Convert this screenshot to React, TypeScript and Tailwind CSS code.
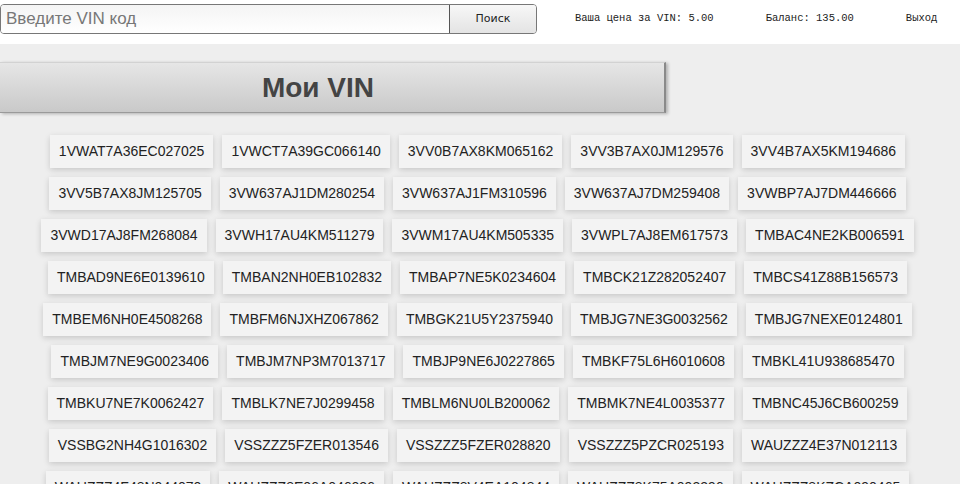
const rows: string[][] = [
  ['1VWAT7A36EC027025', '1VWCT7A39GC066140', '3VV0B7AX8KM065162', '3VV3B7AX0JM129576', '3VV4B7AX5KM194686'],
  ['3VV5B7AX8JM125705', '3VW637AJ1DM280254', '3VW637AJ1FM310596', '3VW637AJ7DM259408', '3VWBP7AJ7DM446666'],
  ['3VWD17AJ8FM268084', '3VWH17AU4KM511279', '3VWM17AU4KM505335', '3VWPL7AJ8EM617573', 'TMBAC4NE2KB006591'],
  ['TMBAD9NE6E0139610', 'TMBAN2NH0EB102832', 'TMBAP7NE5K0234604', 'TMBCK21Z282052407', 'TMBCS41Z88B156573'],
  ['TMBEM6NH0E4508268', 'TMBFM6NJXHZ067862', 'TMBGK21U5Y2375940', 'TMBJG7NE3G0032562', 'TMBJG7NEXE0124801'],
  ['TMBJM7NE9G0023406', 'TMBJM7NP3M7013717', 'TMBJP9NE6J0227865', 'TMBKF75L6H6010608', 'TMBKL41U938685470'],
  ['TMBKU7NE7K0062427', 'TMBLK7NE7J0299458', 'TMBLM6NU0LB200062', 'TMBMK7NE4L0035377', 'TMBNC45J6CB600259'],
  ['VSSBG2NH4G1016302', 'VSSZZZ5FZER013546', 'VSSZZZ5FZER028820', 'VSSZZZ5PZCR025193', 'WAUZZZ4E37N012113'],
  ['WAUZZZ4F48N044070', 'WAUZZZ8E06A046036', 'WAUZZZ8V4EA104844', 'WAUZZZ8K75A093396', 'WAUZZZ8KZCA090465'],
]

function VinChip({ vin }: { vin: string }) {
  return (
    <div className="h-[33px] px-[9px] flex items-center bg-[#f3f3f3] text-[14px] text-[#222] font-['Liberation_Sans',Arial,sans-serif] shadow-[0_2px_6px_rgba(0,0,0,0.16)]">
      {vin}
    </div>
  )
}

export default function App() {
  return (
    <div className="w-[960px] h-[484px] overflow-hidden bg-[#eeeeee]">
      {/* Top bar */}
      <div className="h-[44px] bg-white flex items-start pt-[4px]">
        <div className="flex h-[30px] w-[537px] rounded-[4px] border border-[#777] overflow-hidden">
          <div className="flex-1 flex items-center pl-[5px] bg-gradient-to-b from-[#f4f4f4] to-white text-[17px] text-[#777] font-['Liberation_Sans',Arial,sans-serif]">
            Введите VIN код
          </div>
          <div className="w-[87px] flex items-center justify-center border-l border-[#555] bg-gradient-to-b from-[#f7f7f7] to-[#e4e4e4] text-[11px] text-[#222] font-['DejaVu_Sans',Verdana,sans-serif]">
            Поиск
          </div>
        </div>
        <div className="flex items-center h-[30px] text-[10.5px] text-[#222] font-['Liberation_Mono',monospace]">
          <span className="ml-[38px]">Ваша цена за VIN: 5.00</span>
          <span className="ml-[52px]">Баланс: 135.00</span>
          <span className="ml-[52px]">Выход</span>
        </div>
      </div>

      {/* Title bar */}
      <div className="mt-[18px] w-[666px] h-[51px] flex items-center justify-center pr-[28px] bg-gradient-to-b from-[#e6e6e6] to-[#c9c9c9] border-t border-[#d2d2d2] border-b border-b-[#9a9a9a] border-r-2 border-r-[#8a8a8a] shadow-[2px_1px_3px_rgba(0,0,0,0.25)]">
        <span className="text-[28px] font-bold text-[#444] font-['Liberation_Sans',Arial,sans-serif]">Мои VIN</span>
      </div>

      {/* VIN list */}
      <div className="mt-[22px] w-[955px] flex flex-col gap-[9px]">
        {rows.map((row, i) => (
          <div key={i} className="flex justify-center gap-[9px]">
            {row.map((vin) => (
              <VinChip key={vin} vin={vin} />
            ))}
          </div>
        ))}
      </div>
    </div>
  )
}
